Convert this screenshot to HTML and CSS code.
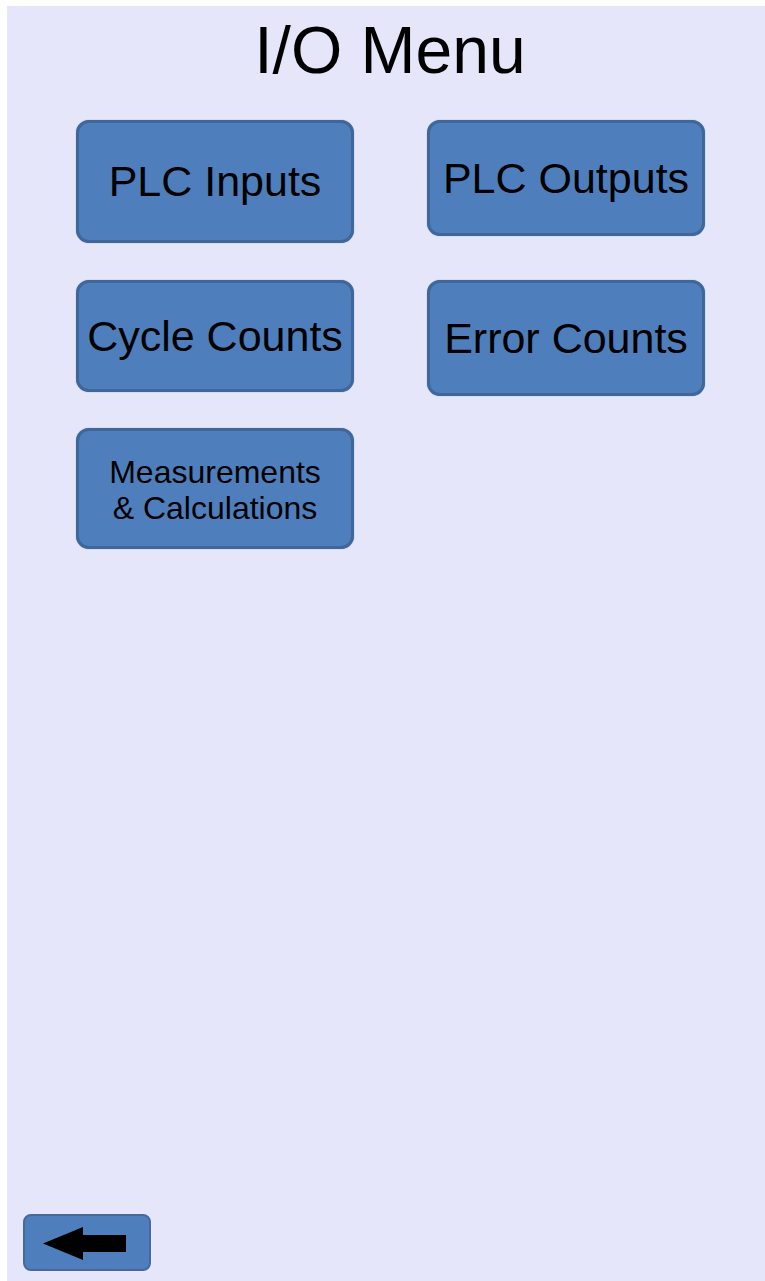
FILE: index.html
```html
<!DOCTYPE html>
<html lang="en">
<head>
<meta charset="utf-8">
<title>I/O Menu</title>
<link rel="stylesheet" href="styles.css">
</head>
<body>
<main class="screen">
  <h1 class="title">I/O Menu</h1>
  <div class="menu">
    <button class="btn btn-inputs">PLC Inputs</button>
    <button class="btn btn-outputs">PLC Outputs</button>
    <button class="btn btn-cycle">Cycle Counts</button>
    <button class="btn btn-error">Error Counts</button>
    <button class="btn btn-measure">Measurements<br>&amp; Calculations</button>
  </div>
  <div class="footer">
    <button class="back" aria-label="Back">
      <svg width="83" height="33" viewBox="0 0 83 33" aria-hidden="true">
        <polygon points="0,16.5 40,0 40,8 83,8 83,25 40,25 40,33" fill="#000"/>
      </svg>
    </button>
  </div>
</main>
</body>
</html>
```

FILE: styles.css
```css
html, body {
  margin: 0;
  padding: 0;
  background: #ffffff;
}

body {
  padding: 6px 0 0 7px;
  font-family: "Liberation Sans", Arial, sans-serif;
}

.screen {
  box-sizing: border-box;
  min-height: calc(100vh - 6px);
  background: #e5e6f9;
  display: flex;
  flex-direction: column;
  padding: 11px 0 10px 0;
}

.title {
  margin: 0;
  padding-left: 8px;
  font-size: 66px;
  line-height: 66px;
  font-weight: normal;
  color: #000;
  text-align: center;
}

.menu {
  margin: 37px 0 0 69px;
  display: grid;
  grid-template-columns: 278px 278px;
  grid-template-rows: 160px 148px auto;
  column-gap: 73px;
  align-items: start;
}

.btn {
  box-sizing: border-box;
  display: flex;
  align-items: center;
  justify-content: center;
  margin: 0;
  padding: 0;
  background: #4e7fbc;
  border: 3px solid #40679a;
  border-radius: 13px;
  box-shadow: 0 0 1px #5a7fa9;
  color: #000;
  font-family: "Liberation Sans", Arial, sans-serif;
  font-size: 43px;
  white-space: nowrap;
  overflow: visible;
  text-align: center;
}

.btn-inputs { height: 123px; }
.btn-outputs { height: 116px; }
.btn-cycle { height: 112px; }
.btn-error { height: 116px; }
.btn-measure {
  height: 121px;
  font-size: 32px;
  line-height: 36px;
  padding-top: 2px;
}

.footer {
  margin-top: auto;
  padding-left: 16px;
}

.back {
  box-sizing: border-box;
  width: 128px;
  height: 57px;
  margin: 0;
  padding: 1px 0 0 18px;
  display: flex;
  align-items: center;
  background: #4e7fbc;
  border: 2px solid #46699a;
  border-radius: 8px;
}

.back svg {
  display: block;
}
```
